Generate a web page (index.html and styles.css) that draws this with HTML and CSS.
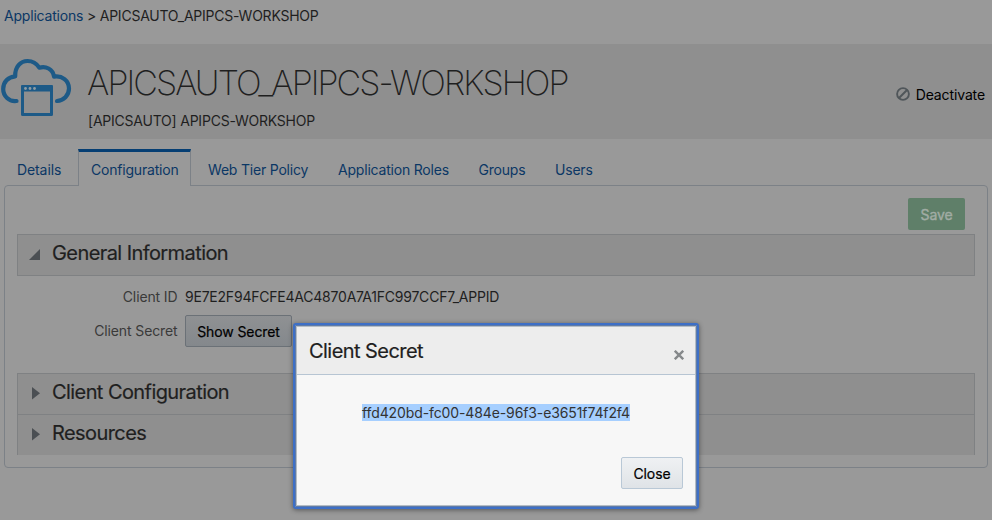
FILE: index.html
```html
<!DOCTYPE html>
<html lang="en">
<head>
<meta charset="utf-8">
<title>Applications</title>
<link rel="stylesheet" href="styles.css">
</head>
<body>
<nav class="crumbs"><a>Applications</a> <span>&gt; APICSAUTO_APIPCS-WORKSHOP</span></nav>
<header class="banner">
  <svg class="app-icon" width="72" height="60" viewBox="0 0 72 60" fill="none">
    <path d="M16.500 43C9 44 3.200 38 3.200 31C3.200 24 8 19 15.200 18.300C14.800 9 20.500 3 27.500 3C33 3 37 6 39.300 9.700C45.500 7.600 53 11 54 18.600C62 17.300 69 22.500 69 30.500C69 37.500 63.500 42.500 57 43" stroke="#1d5a87" stroke-width="4.200" stroke-linecap="round" stroke-linejoin="round"/>
    <path d="M22.500 30V56.500H51.500V30" stroke="#1d5a87" stroke-width="3" stroke-linejoin="round"/>
    <rect x="21" y="27" width="32" height="6.500" rx="1" fill="#1d5a87"/>
    <g fill="#8f9ba3"><circle cx="25.500" cy="30.500" r="1.400"/><circle cx="30" cy="30.500" r="1.400"/><circle cx="34.500" cy="30.500" r="1.400"/></g>
  </svg>
  <div class="heading">
    <h1>APICSAUTO_APIPCS-WORKSHOP</h1>
    <p>[APICSAUTO] APIPCS-WORKSHOP</p>
  </div>
  <div class="deactivate">
    <svg width="14" height="14" viewBox="0 0 14 14" fill="none" stroke="#50565a" stroke-width="1.900"><circle cx="7" cy="7" r="5.900"/><path d="M3 11L11 3"/></svg>
    <span>Deactivate</span>
  </div>
</header>
<div class="tabs">
  <a class="t-details">Details</a><a class="active">Configuration</a><a class="t-web">Web Tier Policy</a><a class="t-roles">Application Roles</a><a class="t-groups">Groups</a><a>Users</a>
</div>
<main class="panel">
  <div class="actions"><button class="save">Save</button></div>
  <section class="bar open"><svg width="12" height="12"><path d="M11 0V11H0Z" fill="#4b4f53"/></svg><h2>General Information</h2></section>
  <div class="fields">
    <div class="field id"><label>Client ID</label><span>9E7E2F94FCFE4AC4870A7A1FC997CCF7_APPID</span></div>
    <div class="field secret"><label>Client Secret</label><button class="show">Show Secret</button></div>
  </div>
  <section class="bar"><svg width="12" height="14"><path d="M3 1L11 7.200L3 13.500Z" fill="#4b4f53"/></svg><h2>Client Configuration</h2></section>
  <section class="bar last"><svg width="12" height="14"><path d="M3 1L11 7.200L3 13.500Z" fill="#4b4f53"/></svg><h2>Resources</h2></section>
</main>
<div class="dialog">
  <div class="dialog-head"><h3>Client Secret</h3><svg width="10" height="10" viewBox="0 0 10 10" stroke="#85888a" stroke-width="2.400"><path d="M.8 .8L9.200 9.200M9.200 .8L.8 9.200"/></svg></div>
  <div class="dialog-body"><span class="selected">ffd420bd-fc00-484e-96f3-e3651f74f2f4</span></div>
  <div class="dialog-foot"><button class="close">Close</button></div>
</div>
</body>
</html>
```
FILE: styles.css
```css
* { box-sizing: border-box; }
html, body { height: 100%; }
body { margin: 0; background: #999; color: #1f1f1f; font: 14px/20px Inter, sans-serif; letter-spacing: -.2px; overflow: hidden; white-space: nowrap; }
h1, h2, h3, p { margin: 0; font-weight: 400; }
button { font: 400 14px/20px Inter, sans-serif; padding: 2px 0 0; border-radius: 2px; height: 32px; letter-spacing: -.1px; -webkit-text-stroke: .2px; }
.crumbs { height: 44px; padding: 6px 0 0 4px; }
.crumbs span { letter-spacing: -.23px; }
.crumbs a, .tabs a { color: #0b3765; }
.banner { height: 95px; background: #8f8f8f; display: flex; }
.app-icon { margin-top: 14px; }
.heading { flex: 1; padding: 19px 0 0 16px; }
.heading h1 { font-size: 34px; line-height: 40px; font-weight: 200; letter-spacing: -1.93px; margin-left: -1px; }
.heading p { margin-top: 8px; letter-spacing: -.22px; }
.deactivate { display: flex; align-items: flex-start; gap: 6px; padding: 41px 7px 0 0; color: #000; letter-spacing: -.12px; }
.deactivate svg { margin-top: 2px; }
.tabs { display: flex; height: 47px; padding: 10px 0 0 17px; position: relative; }
.tabs a { height: 37px; padding-top: 11px; }
.tabs .t-details { width: 61px; letter-spacing: -.1px; }
.tabs .active { width: 113px; padding: 8px 0 0 12px; border: 1px solid #7c8187; border-top: 3px solid #053e73; border-bottom: 0; background: #999; margin-right: 17px; }
.tabs .t-web { width: 130px; }
.tabs .t-roles { width: 140.5px; }
.tabs .t-groups { width: 76.5px; }
.panel { margin: -1px 4px 0; height: 283px; border: 1px solid #7c8187; border-radius: 4px; padding: 12px 12px 0; }
.actions { display: flex; justify-content: flex-end; padding-right: 10px; height: 36px; }
.save { width: 57px; border: 0; background: #5f7f69; color: #a1aca4; -webkit-text-stroke: .4px; }
.bar { display: flex; align-items: flex-start; height: 41px; background: #8f8f8f; border: 1px solid #7f8183; border-bottom: 0; padding: 6px 0 0 11px; }
.bar.open { height: 42px; border-bottom: 1px solid #7f8183; }
.bar svg { margin-top: 6px; }
.bar.open svg { margin-top: 8px; }
.bar h2 { font-size: 20px; line-height: 24px; margin-left: 11px; letter-spacing: -.58px; -webkit-text-stroke: .2px; }
.fields { height: 97px; padding-top: 11px; }
.field { display: flex; gap: 7.5px; }
.field span { letter-spacing: -.22px; }
.field label { width: 160.500px; text-align: right; color: #3a3a3a; letter-spacing: -.12px; }
.secret { margin-top: 8px; }
.secret label { padding-top: 6px; }
.show { width: 107px; color: #000; border: 1px solid #6b7177; background: linear-gradient(#8f9193, #84888c); }
.dialog { position: absolute; left: 293px; top: 323px; width: 406px; height: 186px; border: 2px solid #3d6fc6; border-radius: 3px; background: #f7f7f7; box-shadow: inset 0 0 0 1px #5f7ba8, inset 0 0 0 2px #b4bcc4, 0 1px 5px rgba(0,0,0,.45); padding: 2px; }
.dialog-head { height: 48px; background: #ededed; border-bottom: 1px solid #b7c5d3; display: flex; justify-content: space-between; padding: 12px 11px 0 12px; }
.dialog-head h3 { font-size: 20px; line-height: 24px; letter-spacing: -.55px; -webkit-text-stroke: .2px; }
.dialog-head svg { margin-top: 11px; }
.dialog-body { height: 82px; padding-top: 29px; text-align: center; }
.selected { display: block; width: 268px; margin: 0 auto; height: 17px; line-height: 18px; background: #a6cfff; color: #333; letter-spacing: -.11px; }
.dialog-foot { display: flex; justify-content: flex-end; padding-right: 12px; }
.close { width: 62px; border: 1px solid #b9c8d6; background: linear-gradient(#eff1f3, #dfe3e7); color: #000; }
```
